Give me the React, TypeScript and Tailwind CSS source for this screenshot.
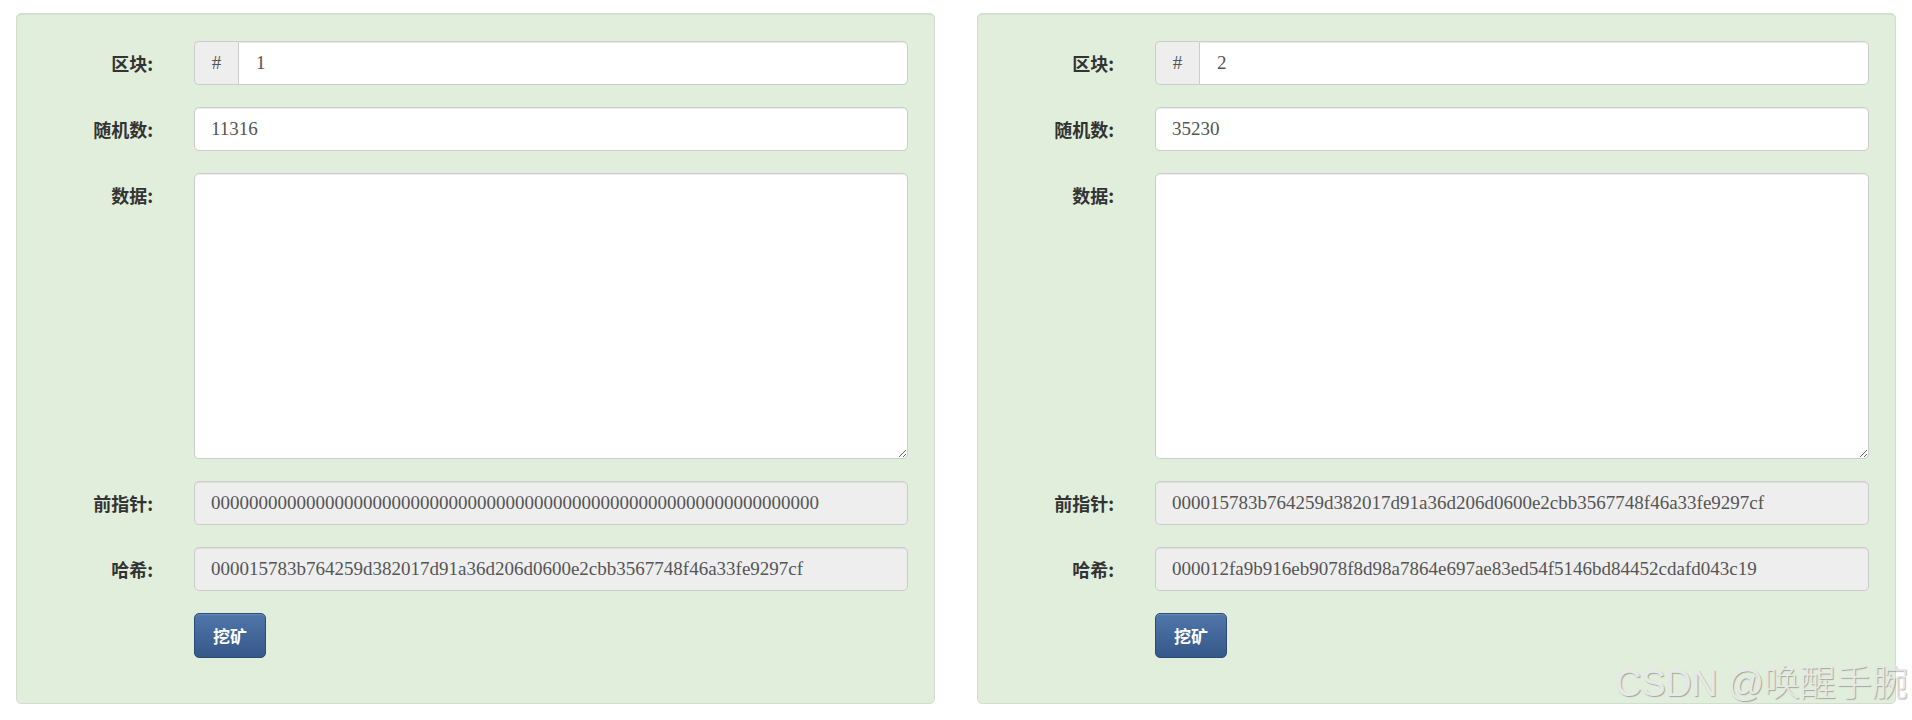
import React from "react";

type Block = {
  index: number;
  nonce: string;
  prev: string;
  hash: string;
};

const blocks: Block[] = [
  {
    index: 1,
    nonce: "11316",
    prev: "0000000000000000000000000000000000000000000000000000000000000000",
    hash: "000015783b764259d382017d91a36d206d0600e2cbb3567748f46a33fe9297cf",
  },
  {
    index: 2,
    nonce: "35230",
    prev: "000015783b764259d382017d91a36d206d0600e2cbb3567748f46a33fe9297cf",
    hash: "000012fa9b916eb9078f8d98a7864e697ae83ed54f5146bd84452cdafd043c19",
  },
];

const labelCls =
  "w-[109px] shrink-0 h-[44px] flex items-center justify-end text-[18px] font-bold text-[#333] font-['Noto_Sans_CJK_SC',sans-serif]";

const inputCls =
  "h-[44px] w-full rounded-[5px] border border-[#ccc] px-[16px] text-[19px] text-[#555] font-['Liberation_Serif',serif] shadow-[inset_0_1px_1px_rgba(0,0,0,0.075)] outline-none";

function Row({ label, children }: { label: string; children: React.ReactNode }) {
  return (
    <div className="flex items-start gap-[41px]">
      <div className={labelCls}>{label}</div>
      <div className="flex-1 min-w-0">{children}</div>
    </div>
  );
}

function BlockCard({ block }: { block: Block }) {
  return (
    <div className="flex-1 min-w-0 rounded-[5px] border border-[#d5dccf] bg-[#e1eedb] pl-[27px] pr-[26px] pt-[27px] pb-[45px] shadow-[inset_0_1px_1px_rgba(0,0,0,0.05)]">
      <div className="flex flex-col gap-[22px]">
        <Row label="区块:">
          <div className="flex h-[44px]">
            <span className="flex w-[44px] shrink-0 items-center justify-center rounded-l-[5px] border border-r-0 border-[#ccc] bg-[#eee] text-[19px] text-[#555] font-['Liberation_Serif',serif]">
              #
            </span>
            <input
              readOnly
              value={String(block.index)}
              className="h-[44px] w-full rounded-r-[5px] border border-[#ccc] bg-white px-[17px] text-[19px] text-[#555] font-['Liberation_Serif',serif] shadow-[inset_0_1px_1px_rgba(0,0,0,0.075)] outline-none"
            />
          </div>
        </Row>
        <Row label="随机数:">
          <input readOnly value={block.nonce} className={`${inputCls} bg-white`} />
        </Row>
        <Row label="数据:">
          <textarea
            className="block h-[286px] w-full rounded-[5px] border border-[#ccc] bg-white px-[16px] py-[10px] text-[19px] text-[#555] font-['Liberation_Serif',serif] shadow-[inset_0_1px_1px_rgba(0,0,0,0.075)] outline-none"
            defaultValue=""
          />
        </Row>
        <Row label="前指针:">
          <input disabled value={block.prev} className={`${inputCls} bg-[#eee]`} />
        </Row>
        <Row label="哈希:">
          <input disabled value={block.hash} className={`${inputCls} bg-[#eee]`} />
        </Row>
        <Row label="">
          <button className="h-[45px] w-[72px] rounded-[5px] border border-[#2c4a78] bg-gradient-to-b from-[#5077ab] to-[#365789] text-[17px] font-bold text-white font-['Noto_Sans_CJK_SC',sans-serif] shadow-[inset_0_1px_0_rgba(255,255,255,0.15)]">
            挖矿
          </button>
        </Row>
      </div>
    </div>
  );
}

export default function App() {
  return (
    <div className="relative h-[720px] w-full overflow-hidden bg-white">
      <div className="flex gap-[42px] px-[16px] pt-[13px]">
        {blocks.map((b) => (
          <BlockCard key={b.index} block={b} />
        ))}
      </div>
      <div className="pointer-events-none absolute right-[4px] top-[666px] text-[36px] leading-none font-light text-[#e8e8e8] font-['Liberation_Sans','Noto_Sans_CJK_SC',sans-serif] [text-shadow:1px_1px_1px_rgba(0,0,0,0.3)]">
        CSDN @唤醒手腕
      </div>
    </div>
  );
}
